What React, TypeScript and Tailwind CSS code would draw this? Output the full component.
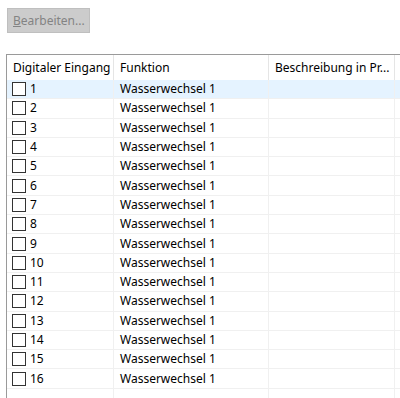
const rows = Array.from({ length: 16 }, (_, i) => i + 1);

export default function App() {
  return (
    <div
      className="w-[400px] h-[398px] bg-white overflow-hidden relative text-[12px] text-black"
      style={{ fontFamily: '"Noto Sans", "Open Sans", sans-serif' }}
    >
      <div className="pt-[8px] pl-[7px]">
        <button
          disabled
          className="w-[83px] h-[25px] bg-[#cccccc] border border-[#bfbfbf] text-[#838383] text-left pl-[5px] leading-[22px]"
        >
          <span className="underline">B</span>earbeiten...
        </button>
      </div>

      <div className="mt-[21px] ml-[6px] border-l border-t border-[#9a9a9a] h-[400px] flex flex-col">
        {/* Header */}
        <div className="flex h-[25px] items-center">
          <div className="w-[107px] h-full flex items-center pl-[6px] border-r border-[#e5e5e5]">
            Digitaler Eingang
          </div>
          <div className="w-[155px] h-full flex items-center pl-[6px] border-r border-[#e5e5e5]">
            Funktion
          </div>
          <div className="w-[126px] h-full flex items-center pl-[6px] border-r border-[#e5e5e5]">
            Beschreibung in Pr...
          </div>
        </div>

        {rows.map((n) => (
          <div
            key={n}
            className={`flex h-[19.3px] border-b border-[#f0f0f0] ${n === 1 ? 'bg-[#e5f3ff]' : ''}`}
          >
            <div className="w-[107px] h-full flex items-center pl-[5px] border-r border-[#f0f0f0]">
              <span className="w-[14px] h-[14px] border border-[#333333] bg-white mr-[4px] shrink-0" />
              {n}
            </div>
            <div className="w-[155px] h-full flex items-center pl-[6px] border-r border-[#f0f0f0]">
              Wasserwechsel 1
            </div>
            <div className="w-[126px] h-full border-r border-[#f0f0f0]" />
          </div>
        ))}

        <div className="flex flex-1">
          <div className="w-[107px] border-r border-[#f0f0f0]" />
          <div className="w-[155px] border-r border-[#f0f0f0]" />
          <div className="w-[126px] border-r border-[#f0f0f0]" />
        </div>
      </div>
    </div>
  );
}
